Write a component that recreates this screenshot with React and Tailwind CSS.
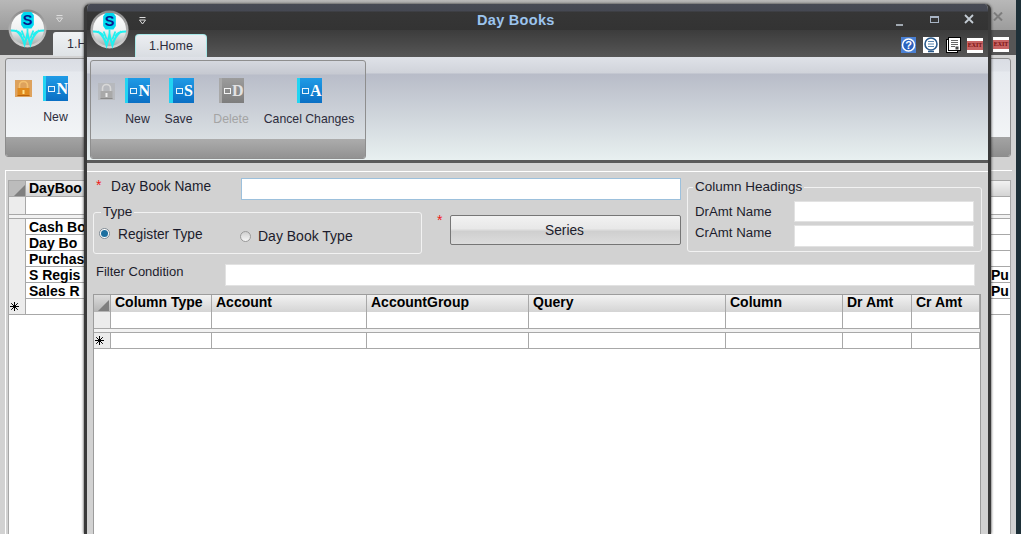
import React from 'react'

const uiFont = "font-['Liberation_Sans',Arial,sans-serif]"

function Logo() {
  return (
    <svg width="39" height="39" viewBox="0 0 40 40">
      <defs>
        <linearGradient id="logoFill" x1="0" y1="0" x2="0" y2="1">
          <stop offset="0" stopColor="#ffffff" />
          <stop offset="0.55" stopColor="#eef0f0" />
          <stop offset="1" stopColor="#a4acac" />
        </linearGradient>
        <linearGradient id="logoRim" x1="0" y1="0" x2="0" y2="1">
          <stop offset="0" stopColor="#8a8a8a" />
          <stop offset="1" stopColor="#d4d4d4" />
        </linearGradient>
      </defs>
      <circle cx="20" cy="20" r="19.5" fill="url(#logoRim)" />
      <circle cx="20" cy="20" r="17" fill="url(#logoFill)" />
      <path d="M16 3h8l2.5 3.5v10L24 20h-8l-2.5-3.5v-10z" fill="#00d8f0" />
      <text x="20" y="16.5" textAnchor="middle" fontSize="15" fontWeight="700" fill="#0a1a8c" fontFamily="Liberation Sans">S</text>
      <path d="M3 22c6 0 9 1 11 5M37 22c-6 0-9 1-11 5M8 22c4 3 7 7 9 14l3-10 3 10c2-7 5-11 9-14" fill="none" stroke="#20f0f0" strokeWidth="2.2" />
      <path d="M14 22l3 8M26 22l-3 8M20 20v7" stroke="#20f0f0" strokeWidth="1.8" />
    </svg>
  )
}

function BookIcon({ letter, disabled, className = '' }) {
  const main = disabled ? 'bg-[linear-gradient(#9c9c9c,#7d7d7d)]' : 'bg-[linear-gradient(#1f9be6,#0a6fc4)]'
  const spine = disabled ? 'bg-[#a8a8a8]' : 'bg-[#22d4f2]'
  return (
    <div className={`flex h-[25px] w-[25px] shrink-0 ${main} ${className}`}>
      <div className={`h-full w-[4px] ${spine}`} />
      <div className="flex flex-1 items-center justify-center gap-[1px] pl-[2px]">
        <div className="h-[6px] w-[7px] border border-white/90" />
        <span className={`font-['Liberation_Serif',serif] text-[16px] leading-none font-bold ${disabled ? 'text-[#e2e2e2]' : 'text-white'}`}>{letter}</span>
      </div>
    </div>
  )
}

function LockIcon({ grey }) {
  const body = grey ? '#a9a9a9' : '#e08a1e'
  const dark = grey ? '#8a8a8a' : '#b8620c'
  return (
    <svg width="17" height="17" viewBox="0 0 17 17">
      <rect width="17" height="17" fill={grey ? '#b4b6b8' : '#d98a2c'} opacity="0.75" />
      <path d="M4.5 8V5.5a4 4 0 0 1 8 0V8" fill="none" stroke={grey ? '#d8d8d8' : '#f4c070'} strokeWidth="1.6" />
      <rect x="2.5" y="8" width="12" height="8" fill={body} />
      <rect x="7.5" y="10" width="2" height="4" fill={grey ? '#eeeeee' : '#ffe08a'} />
      <rect x="2.5" y="15" width="12" height="1" fill={dark} />
    </svg>
  )
}

function RibbonButton({ letter, label, disabled, className, iconClass }) {
  return (
    <div className={`flex flex-col items-center ${className}`}>
      <BookIcon letter={letter} disabled={disabled} className={iconClass} />
      <span className={`mt-[9px] text-[12.25px] leading-[15px] whitespace-nowrap ${disabled ? 'text-[#a4a4a4]' : 'text-[#2c2c3c]'}`}>{label}</span>
    </div>
  )
}

function CaptionDropdown({ className }) {
  return (
    <svg className={className} width="7" height="8" viewBox="0 0 7 8">
      <path d="M0.5 0.5h6" stroke="#dcdcdc" />
      <path d="M0.5 3l3 4 3-4z" fill="none" stroke="#dcdcdc" />
    </svg>
  )
}

function ExitIcon() {
  return (
    <div className="flex h-[15px] w-[16px] items-center justify-center overflow-hidden bg-white">
      <span className="bg-[#c86464] px-[1px] font-['Liberation_Serif',serif] text-[6px] leading-[9px] font-bold text-[#7a1010]">EXIT</span>
    </div>
  )
}

function HelpIcon() {
  return (
    <svg width="15" height="16" viewBox="0 0 15 16">
      <rect width="15" height="16" fill="#4a80d4" />
      <circle cx="7.5" cy="8" r="6" fill="#2a62c0" stroke="#ffffff" strokeWidth="1.5" />
      <text x="7.5" y="12" textAnchor="middle" fontSize="11" fontWeight="700" fill="#ffffff" fontFamily="Liberation Sans">?</text>
    </svg>
  )
}

function NotesIcon() {
  return (
    <svg width="16" height="16" viewBox="0 0 16 16">
      <rect width="16" height="16" fill="#ffffff" />
      <ellipse cx="8" cy="7" rx="6" ry="6" fill="none" stroke="#2a5a8c" strokeWidth="1.6" />
      <path d="M5 4.5h6M5 7h6M5 9.5h6" stroke="#5a86b0" strokeWidth="1.2" />
      <path d="M5 14.5h6" stroke="#2a5a8c" strokeWidth="1.6" />
    </svg>
  )
}

function PagesIcon() {
  return (
    <svg width="15" height="16" viewBox="0 0 15 16">
      <rect x="0.5" y="2.5" width="11" height="13" fill="#ffffff" stroke="#000000" />
      <rect x="2.5" y="0.5" width="12" height="13" fill="#ffffff" stroke="#000000" />
      <path d="M5 3.5h7M5 5.5h7M5 7.5h7M5 9.5h4" stroke="#666666" />
      <rect x="9.5" y="9.5" width="3" height="3" fill="#444444" />
    </svg>
  )
}

function Field({ className }) {
  return <div className={`bg-white border border-[#e2e2e2] ${className}`} />
}

function Radio({ checked }) {
  return (
    <div className={`flex h-[11px] w-[11px] items-center justify-center rounded-full border ${checked ? 'border-[#7e8a94] bg-white' : 'border-[#9a9a9a] bg-[linear-gradient(#d0d0d0,#f6f6f6)]'}`}>
      {checked && <div className="h-[7px] w-[7px] rounded-full bg-[#1c6fa0]" />}
    </div>
  )
}

function GroupBox({ title, className, legendClass, children }) {
  return (
    <div className={`relative rounded-[3px] border border-[#f2f2f2] ${className}`}>
      <span className={`absolute top-[-9px] bg-[#d2d2d2] px-[2px] text-[13.5px] leading-[15px] text-[#1c1c2c] ${legendClass}`}>{title}</span>
      {children}
    </div>
  )
}

function Star({ className = '' }) {
  return <span className={`block h-[10px] w-fit text-[14px] leading-[14px] text-[#f01818] ${className}`}>*</span>
}

function RowMarker() {
  return (
    <svg width="9" height="9" viewBox="0 0 9 9">
      <path d="M4.5 0v9M0 4.5h9M1.2 1.2l6.6 6.6M7.8 1.2L1.2 7.8" stroke="#000000" strokeWidth="1" />
    </svg>
  )
}

function HeaderCell({ className, children }) {
  return (
    <div className={`flex h-[17px] items-center border-r border-[#a8a8a8] pb-[3px] pl-[4px] text-[14px] leading-none font-bold whitespace-nowrap text-black bg-[linear-gradient(#f2f2f2,#d4d4d4)] ${className}`}>
      {children}
    </div>
  )
}

function Corner() {
  return (
    <div className="flex h-[17px] items-end justify-end border-r border-[#a8a8a8] bg-[linear-gradient(#dcdcdc,#b4b4b4)] pr-[1px] pb-[1px]">
      <svg width="11" height="11" viewBox="0 0 11 11"><path d="M11 0v11H0z" fill="#7f7f7f" /></svg>
    </div>
  )
}

const cols = ['Column Type', 'Account', 'AccountGroup', 'Query', 'Column', 'Dr Amt', 'Cr Amt']
const colTemplate = 'grid grid-cols-[17px_101px_155px_162px_197px_117px_69px_68px]'

function GridRow({ h, marker }) {
  return (
    <div className={`${colTemplate} ${h} border-b border-[#a8a8a8]`}>
      <div className="flex items-center border-r border-[#a8a8a8] bg-[#ececec] pl-[1px]">
        {marker && <RowMarker />}
      </div>
      {cols.map((c) => <div key={c} className="border-r border-[#a8a8a8]" />)}
    </div>
  )
}

function DetailGrid() {
  return (
    <div className="mt-[8px] ml-[6px] h-[242px] w-[888px] overflow-hidden border border-[#9c9c9c] bg-white">
      <div className={colTemplate}>
        <Corner />
        {cols.map((c) => <HeaderCell key={c}>{c}</HeaderCell>)}
      </div>
      <GridRow h="h-[17px]" />
      <div className="h-[4px] border-b border-[#a8a8a8] bg-[#f2f2f2]" />
      <GridRow h="h-[16px]" marker />
    </div>
  )
}

function BackWindow() {
  const rows = [
    ['Cash Bo', ''],
    ['Day Bo', ''],
    ['Purchas', ''],
    ['S Regis', 'Pu'],
    ['Sales R', 'Pu'],
  ]
  return (
    <div className="absolute top-0 bottom-0 left-0 flex w-[1016px] flex-col bg-[#d2d2d2]">
      <div className="relative h-[30px] shrink-0 bg-[linear-gradient(#b8b8b8,#9c9c9c)]">
        <svg className="absolute top-[12px] left-[993px]" width="10" height="9" viewBox="0 0 10 9"><path d="M1 0.5l8 8M9 0.5l-8 8" stroke="#7c7c7c" strokeWidth="2" /></svg>
      </div>
      <div className="relative flex h-[25px] shrink-0 justify-end bg-[#565656] pt-[7px] pr-[7px]">
        <div className="absolute top-[2px] left-[53px] flex h-[24px] w-[60px] items-center rounded-t-[3px] bg-[linear-gradient(#f0f2f4,#dfe3e6)] pl-[14px] text-[12.5px] text-[#2c2c3c]">1.H</div>
        <ExitIcon />
      </div>
      <div className="mx-[5px] mt-[3px] flex h-[99px] shrink-0 flex-col overflow-hidden rounded-[3px] border border-[#8c8c8c] bg-[linear-gradient(#dadde4,#dfe2e8_12px,#e6e9ee_13px,#f6f8f9)]">
        <div className="flex flex-1 pt-[17px] pl-[9px]">
          <div className="mt-[4px]"><LockIcon /></div>
          <RibbonButton letter="N" label="New" className="ml-[11px] w-[25px]" />
        </div>
        <div className="h-[19px] bg-[linear-gradient(#a4a4a4,#8e8e8e)]" />
      </div>
      <div className="mt-[13px] mr-[4px] ml-[5px] flex-1 border-t border-l border-white pt-[9px]">
        <div className="mr-[1px] ml-[2px] flex h-full flex-col border-x border-[#a8a8a8] bg-white">
          <div className="grid h-[17px] grid-cols-[17px_1fr] border-y border-[#a8a8a8] bg-[linear-gradient(#f2f2f2,#d4d4d4)]">
            <div className="flex items-end justify-end border-r border-[#a8a8a8] bg-[#bcbcbc]"><svg width="11" height="11" viewBox="0 0 11 11"><path d="M11 0v11H0z" fill="#7f7f7f" /></svg></div>
            <div className="pl-[3px] text-[14px] leading-[14px] font-bold text-black">DayBoo</div>
          </div>
          <div className="grid h-[18px] grid-cols-[17px_1fr] border-b border-[#a8a8a8]"><div className="border-r border-[#a8a8a8] bg-[#ececec]" /><div /></div>
          <div className="h-[4px] border-b border-[#a8a8a8] bg-[#f2f2f2]" />
          {rows.map(([a, b]) => (
            <div key={a} className="grid h-[16px] grid-cols-[17px_965px_1fr] border-b border-[#a8a8a8] text-[14px] leading-[17px] font-bold text-black">
              <div className="border-r border-[#a8a8a8] bg-[#ececec]" />
              <div className="pl-[3px] whitespace-nowrap">{a}</div>
              <div>{b}</div>
            </div>
          ))}
          <div className="grid h-[16px] grid-cols-[17px_1fr] border-b border-[#a8a8a8]">
            <div className="flex items-center border-r border-[#a8a8a8] bg-[#ececec] pl-[1px]"><RowMarker /></div>
            <div />
          </div>
        </div>
      </div>
    </div>
  )
}

function FrontWindow() {
  return (
    <div className="absolute top-[4px] bottom-0 left-[84px] flex w-[907px] flex-col overflow-hidden rounded-t-[6px] border-x-[3px] border-[#3a3a3a] bg-[#d2d2d2] shadow-[0_0_3px_#222]">
      {/* title bar */}
      <div className="relative flex h-[26px] shrink-0 items-center bg-[linear-gradient(#474a55,#454852_7px,#363636_8px,#333333)] pt-[6px] pl-[390px]">
        <span className="text-[14.5px] leading-none font-bold tracking-[0.3px] text-[#9cc4ee]">Day Books</span>
        <div className="absolute top-[10px] right-[14px] flex items-start gap-[25px]">
          <div className="mt-[10px] mr-[2px] h-[2px] w-[7px] bg-[#a0a8b0]" />
          <div className="mt-[2px] h-[7px] w-[9px] border border-t-[2px] border-[#a8b4c4]" />
          <svg width="10" height="10" viewBox="0 0 10 10"><path d="M1 1l8 8M9 1l-8 8" stroke="#c4ccd4" strokeWidth="1.8" /></svg>
        </div>
      </div>
      {/* tab strip */}
      <div className="relative flex h-[27px] shrink-0 items-end justify-end bg-[linear-gradient(#3c3c3c,#565656)] pr-[5px] pb-[4px]">
        <div className="absolute top-[4px] left-[48px] flex h-[23px] w-[72px] items-center justify-center rounded-t-[4px] border-x border-t border-[#a8e8e8] bg-[linear-gradient(#eceef2,#d9dde2)] text-[12.5px] text-[#2c2c3c]">1.Home</div>
        <div className="flex items-center">
          <HelpIcon />
          <div className="ml-[7px]"><NotesIcon /></div>
          <div className="ml-[7px]"><PagesIcon /></div>
          <div className="ml-[6px]"><ExitIcon /></div>
        </div>
      </div>
      {/* ribbon */}
      <div className="h-[103px] shrink-0 bg-[linear-gradient(#dfe2e8,#d0d3da_16px,#b8bcc8_17px,#e8f0f0_100%)] pt-[3px] pl-[3px]">
        <div className="flex h-[99px] w-[276px] flex-col overflow-hidden rounded-[3px] border border-[#8e8e8e] bg-[linear-gradient(#d5d8df,#c6c9d1_13px,#b9bdc9_14px,#e3e9ea_100%)]">
          <div className="flex flex-1 pt-[17px] pl-[7px]">
            <div className="mt-[5px]"><LockIcon grey /></div>
            <RibbonButton letter="N" label="New" className="ml-[10px] w-[25px]" />
            <RibbonButton letter="S" label="Save" className="ml-[15px] w-[27px]" iconClass="ml-[6px]" />
            <RibbonButton letter="D" label="Delete" disabled className="ml-[21px] w-[36px]" />
            <RibbonButton letter="A" label="Cancel Changes" className="ml-[15px] w-[90px]" />
          </div>
          <div className="h-[19px] bg-[linear-gradient(#acacac,#929292)]" />
        </div>
      </div>
      <div className="h-[3px] shrink-0 bg-[#5a5a5a]" />
      {/* form */}
      <div className="flex flex-1 flex-col pt-[8px]">
        <div className="flex flex-1 flex-col border-t border-white pt-[6px]">
          <div className="flex pl-[6px]">
            <div className="w-[594px]">
              <div className="flex h-[22px] items-center">
                <div className="mb-[12px] ml-[3px] w-[15px]"><Star /></div>
                <span className="mb-[6px] w-[130px] text-[13.75px] leading-[15px] text-[#1c1c2c]">Day Book Name</span>
                <div className="h-[22px] w-[440px] border border-[#9cc0dc] bg-white" />
              </div>
              <div className="mt-[12px] flex">
                <GroupBox title="Type" legendClass="left-[7px]" className="h-[42px] w-[329px]">
                  <div className="flex items-start pt-[15px] pl-[5px]">
                    <Radio checked />
                    <span className="mt-[-1px] ml-[8px] w-[122px] text-[13.75px] leading-[15px] text-[#1c1c2c]">Register Type</span>
                    <div className="mt-[3px]"><Radio /></div>
                    <span className="mt-[1px] ml-[7px] text-[14px] leading-[15px] text-[#1c1c2c]">Day Book Type</span>
                  </div>
                </GroupBox>
                <div className="ml-[15px] w-[13px]"><Star className="mt-[1px]" /></div>
                <div className="mt-[3px] flex h-[30px] w-[231px] items-center justify-center rounded-[2px] border border-[#767676] bg-[linear-gradient(#f2f2f2,#e8e8e8_45%,#cfcfcf_55%,#dcdcdc)] pt-[2px] pr-[2px] text-[13.75px] text-[#1c1c2c]">Series</div>
              </div>
            </div>
            <GroupBox title="Column Headings" legendClass="left-[5px]" className="mt-[9px] h-[65px] w-[295px]">
              <div className="flex flex-col gap-[3px] pt-[13px] pl-[7px]">
                <div className="flex h-[21px] items-center">
                  <span className="w-[99px] text-[13.25px] leading-[15px] text-[#1c1c2c]">DrAmt Name</span>
                  <Field className="h-[21px] w-[180px]" />
                </div>
                <div className="flex h-[22px] items-center">
                  <span className="mb-[8px] w-[99px] text-[13.25px] leading-[15px] text-[#1c1c2c]">CrAmt Name</span>
                  <Field className="h-[22px] w-[180px]" />
                </div>
              </div>
            </GroupBox>
          </div>
          <div className="mt-[10px] flex h-[22px] items-center pl-[9px]">
            <span className="mb-[8px] w-[129px] text-[13px] leading-[15px] text-[#1c1c2c]">Filter Condition</span>
            <Field className="h-[22px] w-[750px]" />
          </div>
          <DetailGrid />
        </div>
      </div>
    </div>
  )
}

export default function App() {
  return (
    <div className={`relative h-[534px] w-[1021px] overflow-hidden bg-[#1e3038] ${uiFont}`}>
      <BackWindow />
      <div className="absolute top-[9px] left-[8px]"><Logo /></div>
      <CaptionDropdown className="absolute top-[15px] left-[56px]" />
      <FrontWindow />
      <div className="absolute top-[10px] left-[90px]"><Logo /></div>
      <CaptionDropdown className="absolute top-[17px] left-[139px]" />
    </div>
  )
}
